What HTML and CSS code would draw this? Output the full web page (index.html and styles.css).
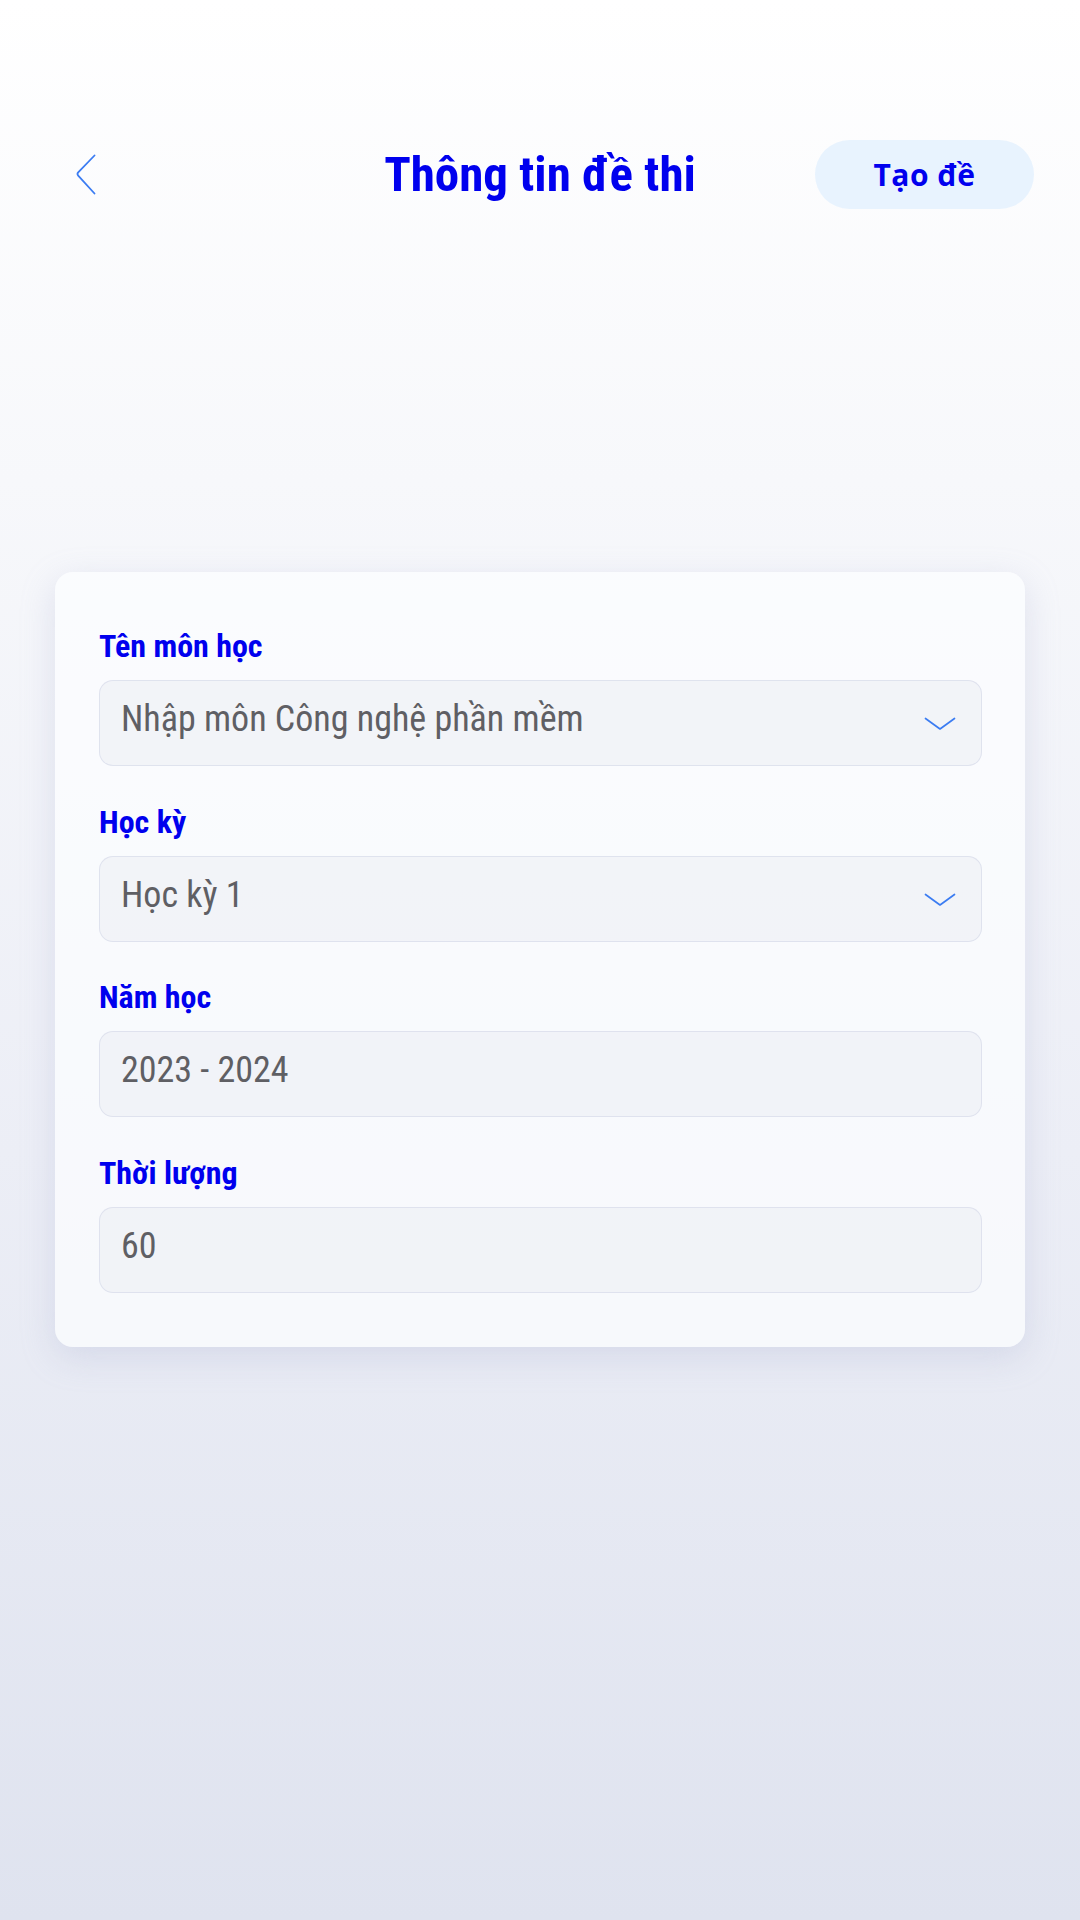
FILE: index.html
```html
<!DOCTYPE html>
<html lang="vi">
<head>
<meta charset="utf-8">
<title>Thông tin đề thi</title>
<link rel="stylesheet" href="styles.css">
</head>
<body>
<div class="screen">
  <header class="topbar">
    <div class="topbar-left">
      <svg class="back-icon" width="22" height="42" viewBox="0 0 22 42" aria-hidden="true">
        <path d="M18.5 1.5 L2.2 18.4 Q0.8 20 2.2 21.6 L18.5 39.5" fill="none" stroke="#3b7cf2" stroke-width="1.8" stroke-linecap="round" stroke-linejoin="round"/>
      </svg>
    </div>
    <h1 class="title">Thông tin đề thi</h1>
    <div class="topbar-right">
      <button class="create-btn" type="button">Tạo đề</button>
    </div>
  </header>

  <main class="card">
    <div class="field">
      <label class="field-label">Tên môn học</label>
      <div class="field-input">
        <span class="field-value">Nhập môn Công nghệ phần mềm</span>
        <svg class="chevron" width="32" height="14" viewBox="0 0 32 14" aria-hidden="true">
          <path d="M1.5 1.5 L16 12 L30.5 1.5" fill="none" stroke="#3b7cf2" stroke-width="1.7" stroke-linecap="round" stroke-linejoin="round"/>
        </svg>
      </div>
    </div>
    <div class="field">
      <label class="field-label">Học kỳ</label>
      <div class="field-input">
        <span class="field-value">Học kỳ 1</span>
        <svg class="chevron" width="32" height="14" viewBox="0 0 32 14" aria-hidden="true">
          <path d="M1.5 1.5 L16 12 L30.5 1.5" fill="none" stroke="#3b7cf2" stroke-width="1.7" stroke-linecap="round" stroke-linejoin="round"/>
        </svg>
      </div>
    </div>
    <div class="field">
      <label class="field-label">Năm học</label>
      <div class="field-input">
        <span class="field-value">2023 - 2024</span>
      </div>
    </div>
    <div class="field">
      <label class="field-label">Thời lượng</label>
      <div class="field-input">
        <span class="field-value">60</span>
      </div>
    </div>
  </main>
</div>
</body>
</html>
```

FILE: styles.css
```css
* {
  box-sizing: border-box;
}

html, body {
  margin: 0;
  padding: 0;
}

body {
  width: 1080px;
  min-height: 1920px;
  background: linear-gradient(180deg, #ffffff 0%, #f7f8fb 25%, #eceef6 60%, #dfe3ef 100%);
  font-family: "Roboto Condensed", "Liberation Sans Narrow", Roboto, sans-serif;
}

.screen {
  min-height: 1920px;
  padding-top: 140px;
}

.topbar {
  display: grid;
  grid-template-columns: 1fr auto 1fr;
  align-items: center;
  height: 69px;
  padding: 0 46px;
}

.topbar-left {
  display: flex;
  align-items: center;
  padding-left: 30px;
}

.back-icon {
  display: block;
}

.title {
  margin: 0;
  font-size: 49px;
  font-weight: 700;
  color: #0000ee;
  line-height: 60px;
  text-align: center;
}

.topbar-right {
  display: flex;
  justify-content: flex-end;
}

.create-btn {
  width: 219px;
  height: 69px;
  border: none;
  border-radius: 35px;
  background: #e8f3fe;
  color: #0000ee;
  font-family: "Open Sans", "DejaVu Sans", sans-serif;
  font-size: 30px;
  font-weight: 700;
  letter-spacing: 0.5px;
  padding: 0;
}

.card {
  display: flex;
  flex-direction: column;
  gap: 35.7px;
  margin: 363px 55px 0;
  padding: 54px 43px 54px 44px;
  border-radius: 18px;
  background: rgba(252, 253, 255, 0.72);
  box-shadow: 0 10px 34px rgba(160, 170, 205, 0.28);
}

.field {
  display: flex;
  flex-direction: column;
}

.field-label {
  display: block;
  font-size: 32px;
  line-height: 40px;
  font-weight: 700;
  color: #0000ee;
  margin-bottom: 14px;
}

.field-input {
  display: flex;
  align-items: flex-start;
  justify-content: space-between;
  height: 86px;
  padding: 16px 25px 0 21px;
  border: 1px solid rgba(215, 220, 234, 0.7);
  border-radius: 14px;
  background: rgba(232, 234, 242, 0.45);
}

.field-value {
  font-size: 36px;
  line-height: 44px;
  font-weight: 400;
  color: #5f5f64;
}

.chevron {
  display: block;
  margin-top: 20px;
}
```
